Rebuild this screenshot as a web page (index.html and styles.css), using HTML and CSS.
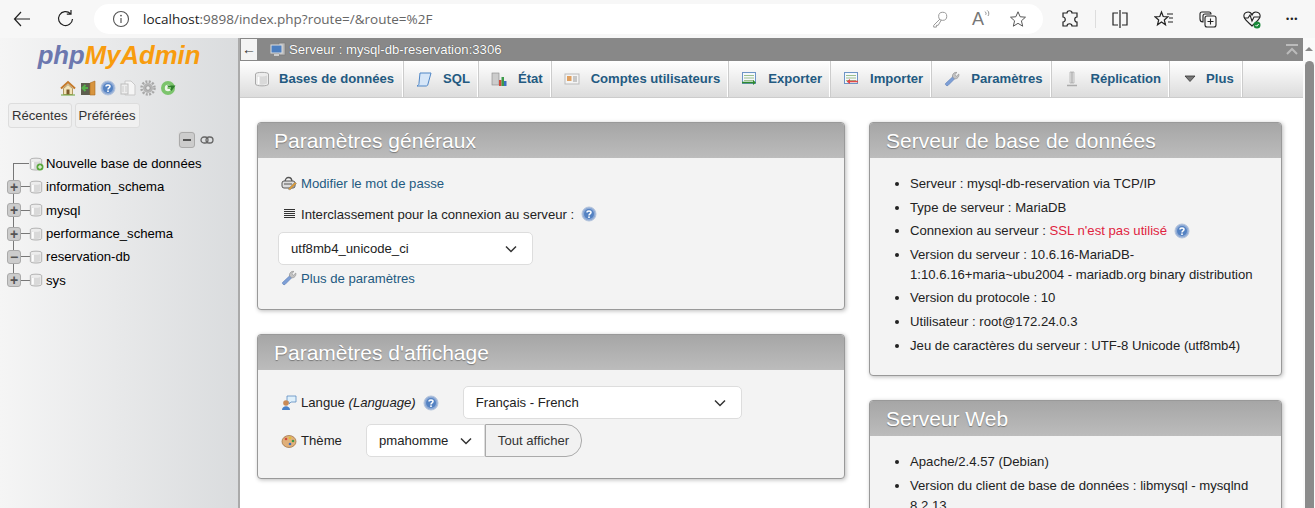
FILE: index.html
```html
<!DOCTYPE html>
<html lang="fr">

<head>
    <meta charset="UTF-8">
    <link rel="stylesheet" href="styles.css">
    <title>phpMyAdmin</title>
</head>

<body>
    <svg class="defs" width="0" height="0">
        <defs>
            <symbol id="i-db" viewBox="0 0 16 16">
                <path d="M1.5 3C1.500 .8 14.500 .8 14.500 3V13C14.500 15.500 1.500 15.500 1.500 13Z" fill="#ececec" stroke="#a9a9a9"/>
                <path d="M3 4.500C6 5.800 10 5.800 13 4.500V12.500C10 14 6 14 3 12.500Z" fill="#d9d9d9"/>
                <path d="M4.500 5.500V13" stroke="#fff" stroke-width="2"/>
            </symbol>
            <symbol id="i-help" viewBox="0 0 16 16">
                <circle cx="8" cy="8" r="7" fill="#8fabd6" stroke="#b4c4dc"/>
                <circle cx="8" cy="8" r="5" fill="#5482c2"/>
                <path d="M6 6.500C6 4.500 10 4.500 10 6.500C10 8 8 7.800 8 9.500" fill="none" stroke="#fff" stroke-width="1.500"/>
                <rect x="7.200" y="10.400" width="1.600" height="1.600" fill="#fff"/>
            </symbol>
            <symbol id="i-wrench" viewBox="0 0 16 16">
                <path d="M1.500 12.500L9 5.500L11 7.500L4 14.500C2.800 15.300 .8 13.800 1.500 12.500Z" fill="#7d9fd6" stroke="#5a7cb5" stroke-width=".6"/>
                <path d="M8.500 6C8 3 10.500 .8 13 1.500L10.800 3.500L12.500 5.200L14.800 3C15.500 5.500 13.300 8.300 10.500 7.800Z" fill="#c3c3c3" stroke="#8a8a8a" stroke-width=".6"/>
            </symbol>
            <symbol id="i-gear" viewBox="0 0 16 16">
                <circle cx="8" cy="8" r="6.500" fill="none" stroke="#a8a8a8" stroke-width="2.500" stroke-dasharray="2 1.400"/>
                <circle cx="8" cy="8" r="5" fill="#b5b5b5"/>
                <circle cx="8" cy="8" r="2.200" fill="#e9e9e9" stroke="#8c8c8c" stroke-width=".7"/>
            </symbol>
            <symbol id="i-sheet" viewBox="0 0 16 16">
                <rect x="1.500" y="1.500" width="13" height="11" fill="#f4f8fc" stroke="#6d94c6"/>
                <path d="M3 4.500H13M3 7H13M3 9.500H13" stroke="#9cc08c"/>
            </symbol>
        </defs>
    </svg>

    <div class="browser-bar">
        <svg class="chrome-icon back" viewBox="0 0 20 20"><path d="M18 10H2.500M9 3L2.500 10L9 17" fill="none" stroke="#222" stroke-width="1.200"/></svg>
        <svg class="chrome-icon reload" viewBox="0 0 20 20"><path d="M16.500 10A7 7 0 1 1 14.500 4.700M15 1V5.200H10.800" fill="none" stroke="#222" stroke-width="1.200"/></svg>
        <div class="address">
            <svg class="info" viewBox="0 0 18 18"><circle cx="9" cy="9" r="7.500" fill="none" stroke="#555" stroke-width="1.100"/><path d="M9 8V13" stroke="#555" stroke-width="1.200"/><circle cx="9" cy="5.600" r=".9" fill="#555"/></svg>
            <span class="url"><b>localhost</b>:9898/index.php?route=/&amp;route=%2F</span>
            <svg class="addr-icon" viewBox="0 0 20 20"><circle cx="13" cy="7" r="4.500" fill="none" stroke="#999" stroke-width="1.100"/><path d="M10 10L3 17V19H6V17H8L11.500 11" fill="none" stroke="#999" stroke-width="1.100"/></svg>
            <span class="read-aloud">A<svg viewBox="0 0 10 10"><path d="M1 2C3 3 3 5 2 6M4 .5C6.500 2 6.500 5.500 5 7.500" fill="none" stroke="#777"/></svg></span>
            <svg class="addr-icon" viewBox="0 0 20 20"><path d="M10 2L12.400 7.500L18.300 8L13.800 12L15.200 18L10 14.800L4.800 18L6.200 12L1.700 8L7.600 7.500Z" fill="none" stroke="#555" stroke-width="1.100"/></svg>
        </div>
        <div class="tools">
            <svg viewBox="0 0 20 20"><path d="M7 4C7 1 12 1 12 4H17V8C14 8 14 13 17 13V17H12C12 14 7 14 7 17H3V13C6 13 6 8 3 8V4Z" fill="none" stroke="#222" stroke-width="1.200"/></svg>
            <i class="tool-sep"></i>
            <svg viewBox="0 0 20 20"><path d="M10 1V19M8 4H3V16H8M12 4H17V16H12" fill="none" stroke="#222" stroke-width="1.200"/></svg>
            <svg viewBox="0 0 20 20"><path d="M7.500 3L9.200 7.500L14 7.800L10.300 11L11.500 15.800L7.500 13L3.500 15.800L4.700 11L1 7.800L5.800 7.500ZM13 5H19M15 9H19M14 13H19" fill="none" stroke="#222" stroke-width="1.200"/></svg>
            <svg viewBox="0 0 20 20"><path d="M4 3H11C12 3 13 4 13 5H7C5.500 5 5 6 5 7V13C3 13 2 12 2 10V5C2 4 3 3 4 3Z" fill="none" stroke="#222" stroke-width="1.100"/><rect x="7" y="7" width="11" height="11" rx="2" fill="none" stroke="#222" stroke-width="1.100"/><path d="M12.500 9.500V15.500M9.500 12.500H15.500" stroke="#222" stroke-width="1.100"/></svg>
            <svg viewBox="0 0 20 20"><path d="M10 6C8 1 1 3 2 8C3 11 7 14 10 17C13 14 17 11 18 8C19 3 12 1 10 6Z" fill="none" stroke="#222" stroke-width="1.100"/><path d="M2 9H6L8 6L10 12L12 8H18" fill="none" stroke="#222" stroke-width="1.100"/><circle cx="15" cy="16" r="3.500" fill="#1a8a3a"/><path d="M13.500 16L14.700 17.200L16.700 15" fill="none" stroke="#fff"/></svg>
            <span class="dots">&#8226;&#8226;&#8226;</span>
        </div>
    </div>

    <div class="app">
        <div class="sidebar">
            <div class="logo"><span class="php">php</span><span class="my">MyAdmin</span></div>
            <div class="nav-icons">
                <svg viewBox="0 0 16 16"><path d="M1 8.500L8 2L15 8.500" fill="none" stroke="#c47a2a" stroke-width="2"/><path d="M3.500 8.500L8 4.500L12.500 8.500V14.500H3.500Z" fill="#f3e3b8" stroke="#97772f" stroke-width=".7"/><rect x="6.500" y="9.500" width="3" height="5" fill="#7b5a2b"/><path d="M1 15H15" stroke="#6aa53a"/></svg>
                <svg viewBox="0 0 16 16"><rect x="1" y="3" width="9" height="12" fill="#5d5d4e"/><path d="M10 3L15 1V15H10Z" fill="#d8953f" stroke="#a96c22" stroke-width=".6"/><path d="M8 8H3M5.500 5L2.500 8L5.500 11" fill="none" stroke="#56b04a" stroke-width="2"/></svg>
                <svg viewBox="0 0 16 16"><use href="#i-help"/></svg>
                <svg viewBox="0 0 16 16"><path d="M5 1H11L15 5V15H5Z" fill="#f5f5f5" stroke="#c9c9c9"/><rect x="1" y="4" width="7" height="10" fill="#eee" stroke="#bdbdbd"/><path d="M3 6V12M6 6V12" stroke="#ccc"/></svg>
                <svg viewBox="0 0 16 16"><use href="#i-gear"/></svg>
                <svg viewBox="0 0 16 16"><circle cx="8" cy="8" r="7" fill="#7cc46c"/><circle cx="8" cy="8" r="3.200" fill="#eef5ea"/><path d="M7 5.500H15.500L11.500 11Z" fill="#2f7f2c"/><path d="M7.500 8H11" stroke="#7cc46c" stroke-width="2"/></svg>
            </div>
            <div class="nav-tabs">
                <button class="nav-btn">Récentes</button>
                <button class="nav-btn">Préférées</button>
            </div>
            <div class="tree-tools">
                <span class="collapse-all"><i></i></span>
                <svg viewBox="0 0 14 8"><rect x="1" y="1" width="7" height="6" rx="3" fill="none" stroke="#666" stroke-width="1.300"/><rect x="6" y="1" width="7" height="6" rx="3" fill="none" stroke="#666" stroke-width="1.300"/></svg>
            </div>
            <ul class="tree">
                <li class="tree-row first"><span class="branch"></span>
                    <span class="db-new"><svg viewBox="0 0 16 16"><use href="#i-db"/></svg><svg class="plus-dot" viewBox="0 0 8 8"><circle cx="4" cy="4" r="3.500" fill="#5aa83c"/><path d="M4 2V6M2 4H6" stroke="#fff"/></svg></span>
                    <a>Nouvelle base de données</a></li>
                <li class="tree-row"><span class="expander">+</span><span class="stub"></span><svg class="db" viewBox="0 0 16 16"><use href="#i-db"/></svg><a>information_schema</a></li>
                <li class="tree-row"><span class="expander">+</span><span class="stub"></span><svg class="db" viewBox="0 0 16 16"><use href="#i-db"/></svg><a>mysql</a></li>
                <li class="tree-row"><span class="expander">+</span><span class="stub"></span><svg class="db" viewBox="0 0 16 16"><use href="#i-db"/></svg><a>performance_schema</a></li>
                <li class="tree-row"><span class="expander">&#8722;</span><span class="stub"></span><svg class="db" viewBox="0 0 16 16"><use href="#i-db"/></svg><a>reservation-db</a></li>
                <li class="tree-row last"><span class="expander">+</span><span class="stub"></span><svg class="db" viewBox="0 0 16 16"><use href="#i-db"/></svg><a>sys</a></li>
            </ul>
        </div>

        <div class="main">
            <div class="server-bar">
                <span class="back-btn">&#8592;</span>
                <svg class="srv-icon" viewBox="0 0 16 16"><rect x="9" y="1" width="6" height="12" fill="#bbb" stroke="#777" stroke-width=".6"/><rect x="1" y="3" width="11" height="8" fill="#4d7fc0" stroke="#ddd"/><rect x="4" y="12" width="5" height="2" fill="#ccc"/></svg>
                <span class="server-name">Serveur : mysql-db-reservation:3306</span>
                <svg class="top-icon" viewBox="0 0 12 12"><path d="M0 1H12" stroke="#bbb" stroke-width="2"/><path d="M1 10L6 5L11 10" fill="none" stroke="#bbb" stroke-width="2"/></svg>
            </div>
            <div class="menu">
                <a class="tab"><svg viewBox="0 0 16 16"><use href="#i-db"/></svg>Bases de données</a>
                <a class="tab"><svg viewBox="0 0 16 16"><path d="M4 2H15L12 13C12 15 10 15 10 15H1C3 14 3 13 3 12Z" fill="#d6e6f8" stroke="#4f86c6"/></svg>SQL</a>
                <a class="tab"><svg viewBox="0 0 16 16"><rect x="1" y="2" width="7" height="12" fill="#ccc" stroke="#888" stroke-width=".6"/><rect x="8" y="9" width="2.500" height="6" fill="#d04a3a"/><rect x="10.500" y="6" width="2.500" height="9" fill="#3c9a4a"/><rect x="13" y="10" width="2.500" height="5" fill="#3c6fc0"/></svg>État</a>
                <a class="tab"><svg viewBox="0 0 16 16"><rect x="1" y="3" width="14" height="10" fill="#f4f4f4" stroke="#bbb"/><rect x="3" y="5" width="4.500" height="5" fill="#e0a060"/><path d="M9 6H13M9 8H13M9 10H13" stroke="#999"/></svg>Comptes utilisateurs</a>
                <a class="tab"><svg viewBox="0 0 16 16"><use href="#i-sheet"/><path d="M1 11.500H13" stroke="#2f8a2f" stroke-width="1.600"/><path d="M12 9L15 11.500L12 14" fill="#2f8a2f"/></svg>Exporter</a>
                <a class="tab"><svg viewBox="0 0 16 16"><use href="#i-sheet"/><path d="M5 10.500H15" stroke="#e04a4a" stroke-width="1.600"/><path d="M7 8L3.500 10.500L7 13" fill="#e04a4a"/></svg>Importer</a>
                <a class="tab"><svg viewBox="0 0 16 16"><use href="#i-wrench"/></svg>Paramètres</a>
                <a class="tab"><svg viewBox="0 0 16 16"><path d="M6 1H10V12H6Z" fill="#e8e8e8" stroke="#aaa" stroke-width=".7"/><path d="M8 1V12" stroke="#999"/><path d="M3 14.500H13" stroke="#aaa" stroke-width="1.500"/></svg>Réplication</a>
                <a class="tab"><svg viewBox="0 0 16 16"><path d="M3 5H13L8 10.500Z" fill="#777" stroke="#333" stroke-width=".8"/></svg>Plus</a>
            </div>

            <div class="columns">
                <div class="col-left">
                    <div class="panel">
                        <h2>Paramètres généraux</h2>
                        <div class="panel-body settings-gen">
                            <div class="line"><svg class="ico" viewBox="0 0 16 16"><path d="M4 7C4 1 11 1 11 7" fill="none" stroke="#555" stroke-width="1.300"/><rect x="1" y="6" width="13" height="7" rx="2" fill="#ddd" stroke="#555"/><path d="M3 9H11" stroke="#555"/><path d="M7 14L14 7L15.500 8.500L9 15Z" fill="#d89a3a" stroke="#777" stroke-width=".4"/></svg><a>Modifier le mot de passe</a></div>
                            <div class="line"><svg class="ico" viewBox="0 0 16 16"><path d="M3 3.500H14M3 5.500H14M3 7.500H14M3 9.500H14M3 11.500H14" stroke="#333"/></svg><span>Interclassement pour la connexion au serveur :</span><svg class="help" viewBox="0 0 16 16"><use href="#i-help"/></svg></div>
                            <select class="select collation"><option>utf8mb4_unicode_ci</option></select>
                            <div class="line"><svg class="ico" viewBox="0 0 16 16"><use href="#i-wrench"/></svg><a>Plus de paramètres</a></div>
                        </div>
                    </div>
                    <div class="panel">
                        <h2>Paramètres d'affichage</h2>
                        <div class="panel-body settings-disp">
                            <div class="form-row">
                                <svg class="ico" viewBox="0 0 16 16"><path d="M6 1H15V7H10L8 9V7H6Z" fill="#dff0fb" stroke="#5a8cc0" stroke-width=".8"/><circle cx="5" cy="8" r="2.800" fill="#c98a55"/><path d="M1 15C1 10 9 10 9 15Z" fill="#4a82c8"/></svg>
                                <span>Langue <em>(Language)</em></span>
                                <svg class="help" viewBox="0 0 16 16"><use href="#i-help"/></svg>
                                <select class="select language"><option>Français - French</option></select>
                            </div>
                            <div class="form-row">
                                <svg class="ico" viewBox="0 0 16 16"><ellipse cx="8" cy="8.500" rx="7" ry="6" fill="#e0b07a" stroke="#9a6a3a" stroke-width=".7"/><circle cx="5" cy="6" r="1.300" fill="#d04a3a"/><circle cx="9" cy="5" r="1.300" fill="#e0c030"/><circle cx="12" cy="8" r="1.300" fill="#3c9a4a"/><circle cx="9" cy="11" r="1.300" fill="#3c6fc0"/></svg>
                                <span class="theme-label">Thème</span>
                                <select class="select theme"><option>pmahomme</option></select><button class="show-all">Tout afficher</button>
                            </div>
                        </div>
                    </div>
                </div>
                <div class="col-right">
                    <div class="panel">
                        <h2>Serveur de base de données</h2>
                        <div class="panel-body">
                            <ul class="info-list">
                                <li>Serveur : mysql-db-reservation via TCP/IP</li>
                                <li>Type de serveur : MariaDB</li>
                                <li>Connexion au serveur : <span class="warn">SSL n'est pas utilisé</span><svg class="help" viewBox="0 0 16 16"><use href="#i-help"/></svg></li>
                                <li>Version du serveur : 10.6.16-MariaDB-1:10.6.16+maria~ubu2004 - mariadb.org binary distribution</li>
                                <li>Version du protocole : 10</li>
                                <li>Utilisateur : root@172.24.0.3</li>
                                <li>Jeu de caractères du serveur : UTF-8 Unicode (utf8mb4)</li>
                            </ul>
                        </div>
                    </div>
                    <div class="panel">
                        <h2>Serveur Web</h2>
                        <div class="panel-body">
                            <ul class="info-list">
                                <li>Apache/2.4.57 (Debian)</li>
                                <li>Version du client de base de données : libmysql - mysqlnd 8.2.13</li>
                            </ul>
                        </div>
                    </div>
                </div>
            </div>
        </div>

        <div class="scrollbar">
            <span class="scroll-up"></span>
            <span class="scroll-thumb"></span>
        </div>
    </div>
</body>

</html>
```
FILE: styles.css
```css
@charset "UTF-8";

/* ========BASIC======== */
html,
body {
    height: 100%;
}

body {
    display: flex;
    flex-direction: column;
    margin: 0;
    overflow: hidden;
    font-family: "Liberation Sans", Arial, sans-serif;
    font-size: 13.15px;
    color: #444;
    background: #fff;
}

a {
    color: #235a81;
    text-decoration: none;
}

ul {
    margin: 0;
    padding: 0;
    list-style: none;
}

.defs {
    display: block;
    height: 0;
}


/* ========BROWSER BAR======== */
.browser-bar {
    display: flex;
    flex: none;
    align-items: center;
    height: 38px;
    background: #f7f7f7;
}

.chrome-icon {
    flex: none;
    width: 20px;
    height: 20px;
}

.back {
    margin-left: 12px;
}

.reload {
    margin-left: 24px;
}

.address {
    display: flex;
    flex: none;
    align-items: center;
    width: 949px;
    height: 30px;
    margin-left: 18px;
    border-radius: 15px;
    background: #fff;
}

.info {
    width: 18px;
    height: 18px;
    margin-left: 18px;
}

.url {
    flex: 1;
    margin-left: 13px;
    font-family: "Open Sans", sans-serif;
    font-size: 13.5px;
    color: #666;
}

.url b {
    font-weight: 400;
    color: #222;
}

.addr-icon {
    width: 18px;
    height: 18px;
    margin-right: 16px;
}

.read-aloud {
    display: flex;
    width: 22px;
    margin-right: 15px;
    margin-left: 7px;
    font-size: 18px;
    line-height: 18px;
    color: #777;
}

.read-aloud svg {
    width: 8px;
    height: 8px;
}

.tools {
    display: flex;
    flex: 1;
    align-items: center;
    gap: 24px;
    padding-left: 17px;
}

.tools svg {
    flex: none;
    width: 20px;
    height: 20px;
}

.tool-sep {
    flex: none;
    width: 1px;
    height: 18px;
    margin: 0 -10px 0 -9px;
    background: #ddd;
}

.dots {
    font-size: 9px;
    letter-spacing: 1px;
    color: #222;
}


/* ========LAYOUT======== */
.app {
    display: flex;
    flex: 1;
    min-height: 0;
}


/* ========SIDEBAR======== */
.sidebar {
    flex: none;
    width: 238px;
    border-right: 2px solid #aaa;
    background: linear-gradient(to right, #f5f5f5, #dadcde);
    color: #000;
}

.logo {
    height: 24px;
    margin-top: 5px;
    font-size: 25.7px;
    font-style: italic;
    font-weight: 700;
    line-height: 24px;
    text-align: center;
    white-space: nowrap;
}

.php {
    color: #6c78af;
}

.my {
    color: #f89c0e;
}

.nav-icons {
    display: flex;
    gap: 4px;
    justify-content: center;
    margin-top: 13px;
    padding-right: 2px;
}

.nav-icons svg {
    width: 16px;
    height: 16px;
}

.nav-tabs {
    display: flex;
    gap: 3px;
    margin-top: 7px;
    padding-left: 8px;
}

.nav-btn {
    height: 25px;
    padding: 0 3px;
    border: 1px solid #ddd;
    border-radius: 3px;
    background: #f0f0f0;
    font-family: inherit;
    font-size: 13.15px;
    color: #333;
}

.tree-tools {
    display: flex;
    gap: 5px;
    align-items: center;
    justify-content: flex-end;
    height: 16px;
    margin-top: 4px;
    padding-right: 24px;
}

.tree-tools svg {
    width: 14px;
    height: 8px;
}

.collapse-all {
    display: flex;
    align-items: center;
    justify-content: center;
    width: 14px;
    height: 14px;
    border: 1px solid #aaa;
    border-radius: 3px;
    background: #ccc;
    box-shadow: -1px -1px 0 #ddd;
}

.collapse-all i {
    width: 8px;
    height: 2px;
    background: #555;
}

.tree {
    margin-top: 4px;
    padding-left: 7px;
}

.tree-row {
    display: flex;
    align-items: center;
    height: 23.3px;
    background: linear-gradient(#777, #777) 6px 0 / 1px 100% no-repeat;
}

.tree-row.first {
    background-position: 6px 100%;
    background-size: 1px 50%;
}

.tree-row.last {
    background-size: 1px 50%;
}

.tree-row a {
    margin-left: 3px;
    color: #000;
    white-space: nowrap;
}

.branch {
    flex: none;
    width: 16px;
    height: 1px;
    margin-left: 6px;
    background: #777;
}

.db-new {
    display: flex;
    flex: none;
    align-items: flex-end;
    width: 14px;
}

.db-new svg:first-child {
    flex: none;
    width: 14px;
    height: 14px;
}

.plus-dot {
    flex: none;
    width: 8px;
    height: 8px;
    margin-left: -7px;
}

.expander {
    display: flex;
    flex: none;
    align-items: center;
    justify-content: center;
    width: 12px;
    height: 12px;
    border: 1px solid #aaa;
    border-radius: 3px;
    background: #ccc;
    font-size: 14px;
    font-weight: 700;
    line-height: 12px;
    color: #555;
}

.stub {
    flex: none;
    width: 9px;
    height: 1px;
    background: #777;
}

.db {
    flex: none;
    width: 14px;
    height: 14px;
    margin-left: -1px;
}


/* ========SERVER BAR AND MENU======== */
.main {
    flex: 1;
    min-width: 0;
    overflow: hidden;
}

.server-bar {
    display: flex;
    align-items: center;
    height: 23px;
    background: #888;
    color: #fff;
    text-shadow: 0 0 1px #333;
    white-space: nowrap;
}

.back-btn {
    flex: none;
    width: 16px;
    height: 21px;
    margin-left: 1px;
    background: #f3f3f3;
    font-size: 14px;
    line-height: 21px;
    text-align: center;
    text-shadow: none;
    color: #333;
}

.srv-icon {
    width: 16px;
    height: 16px;
    margin-left: 13px;
}

.server-name {
    flex: 1;
    margin-left: 3px;
}

.top-icon {
    width: 12px;
    height: 12px;
    margin-right: 5px;
}

.menu {
    display: flex;
    height: 36px;
    border-bottom: 1px solid #ccc;
    background: linear-gradient(#fff, #dcdcdc);
}

.tab {
    display: flex;
    align-items: center;
    gap: 11px;
    padding: 0 7px 1px 13px;
    border-right: 1px solid #fff;
    box-shadow: 1px 0 0 #ccc;
    font-size: 13.1px;
    font-weight: 700;
    white-space: nowrap;
}

.tab svg {
    width: 16px;
    height: 16px;
}

.tab:first-child {
    gap: 9px;
    margin-left: 1px;
    padding-right: 8px;
}

.tab:last-child {
    gap: 8px;
}


/* ========PANELS======== */
.columns {
    display: flex;
    gap: 24px;
    padding: 24px 21px 0 17px;
}

.col-left {
    flex: none;
    width: 588px;
}

.col-right {
    flex: 1;
    min-width: 0;
}

.panel {
    margin-bottom: 24px;
    border: 1px solid #999;
    border-radius: 4px;
    background: #f3f3f3;
    box-shadow: 1px 1px 4px #bbb;
    color: #222;
}

.panel h2 {
    height: 35px;
    margin: 0;
    padding-left: 16px;
    border-radius: 3px 3px 0 0;
    background: linear-gradient(#a6a6a6, #bcbcbc);
    font-size: 21px;
    font-weight: 400;
    line-height: 36px;
    color: #fff;
    text-shadow: 0 1px 1px #777;
}

.settings-gen {
    height: 151px;
    padding: 15px 0 0 20px;
    box-sizing: border-box;
}

.settings-disp {
    height: 108px;
    padding: 16px 0 0 23px;
    box-sizing: border-box;
}

.line {
    display: flex;
    align-items: center;
    height: 20px;
    margin-bottom: 11px;
    padding-left: 3px;
}

.line:nth-child(2) {
    margin-bottom: 8px;
}

.ico {
    flex: none;
    width: 16px;
    height: 16px;
    margin-right: 4px;
}

.help {
    flex: none;
    width: 16px;
    height: 16px;
    margin-left: 7px;
    vertical-align: -4px;
}

.select {
    display: block;
    height: 33px;
    padding: 0 12px;
    border: 1px solid #ddd;
    border-radius: 5px;
    appearance: none;
    background: #fff url("data:image/svg+xml,%3Csvg xmlns='http://www.w3.org/2000/svg' viewBox='0 0 12 8'%3E%3Cpath d='M1 1.500L6 6.500L11 1.500' fill='none' stroke='%23333' stroke-width='1.500'/%3E%3C/svg%3E") no-repeat right 15px center / 12px 8px;
    font-family: inherit;
    font-size: 13.15px;
    color: #222;
}

.collation {
    width: 255px;
    margin-bottom: 3px;
}

.form-row {
    display: flex;
    align-items: center;
    height: 33px;
    margin-bottom: 5px;
}

.language {
    width: 279px;
    margin-left: 24px;
}

.theme-label {
    width: 65px;
}

.theme {
    width: 119px;
    border-radius: 5px 0 0 5px;
    background-position: right 12px center;
}

.show-all {
    width: 97px;
    height: 33px;
    border: 1px solid #aaa;
    border-radius: 0 16px 16px 0;
    background: #f1f1f1;
    font-family: inherit;
    font-size: 13.15px;
    color: #333;
}

.info-list {
    padding: 16px 24px 16px 40px;
    list-style: disc;
}

.info-list li {
    margin-bottom: 3.6px;
    line-height: 20px;
}

.warn {
    color: #e0233f;
}


/* ========SCROLLBAR======== */
.scrollbar {
    display: flex;
    flex: none;
    flex-direction: column;
    align-items: center;
    width: 12px;
    background: #fafafa;
}

.scroll-up {
    width: 0;
    height: 0;
    margin-top: 9px;
    border-right: 4px solid transparent;
    border-bottom: 4px solid #888;
    border-left: 4px solid transparent;
}

.scroll-thumb {
    flex: 1;
    width: 9px;
    margin-top: 10px;
    border-radius: 5px 5px 0 0;
    background: #8b8b8b;
}
```
